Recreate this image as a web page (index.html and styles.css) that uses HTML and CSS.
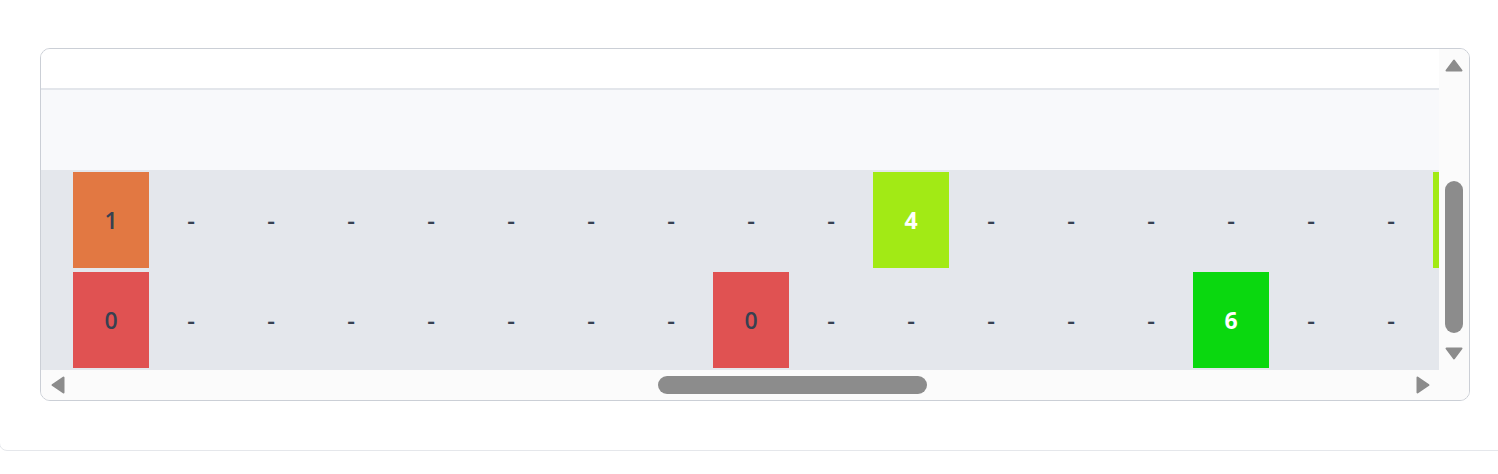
FILE: index.html
```html
<!DOCTYPE html>
<html lang="en">
<head>
<meta charset="utf-8">
<title>Grid</title>
<link rel="stylesheet" href="styles.css">
</head>
<body>
<div class="card">
  <div class="frame">
    <div class="viewport">
      <div class="head-top"></div>
      <div class="head-sub"></div>
      <div class="row">
        <div class="cell"><div class="box box-orange">1</div></div>
        <div class="cell"><span class="dash">-</span></div>
        <div class="cell"><span class="dash">-</span></div>
        <div class="cell"><span class="dash">-</span></div>
        <div class="cell"><span class="dash">-</span></div>
        <div class="cell"><span class="dash">-</span></div>
        <div class="cell"><span class="dash">-</span></div>
        <div class="cell"><span class="dash">-</span></div>
        <div class="cell"><span class="dash">-</span></div>
        <div class="cell"><span class="dash">-</span></div>
        <div class="cell"><div class="box box-lime">4</div></div>
        <div class="cell"><span class="dash">-</span></div>
        <div class="cell"><span class="dash">-</span></div>
        <div class="cell"><span class="dash">-</span></div>
        <div class="cell"><span class="dash">-</span></div>
        <div class="cell"><span class="dash">-</span></div>
        <div class="cell"><span class="dash">-</span></div>
        <div class="cell"><div class="box box-lime"></div></div>
      </div>
      <div class="row">
        <div class="cell"><div class="box box-red">0</div></div>
        <div class="cell"><span class="dash">-</span></div>
        <div class="cell"><span class="dash">-</span></div>
        <div class="cell"><span class="dash">-</span></div>
        <div class="cell"><span class="dash">-</span></div>
        <div class="cell"><span class="dash">-</span></div>
        <div class="cell"><span class="dash">-</span></div>
        <div class="cell"><span class="dash">-</span></div>
        <div class="cell"><div class="box box-red">0</div></div>
        <div class="cell"><span class="dash">-</span></div>
        <div class="cell"><span class="dash">-</span></div>
        <div class="cell"><span class="dash">-</span></div>
        <div class="cell"><span class="dash">-</span></div>
        <div class="cell"><span class="dash">-</span></div>
        <div class="cell"><div class="box box-green">6</div></div>
        <div class="cell"><span class="dash">-</span></div>
        <div class="cell"><span class="dash">-</span></div>
      </div>
    </div>
    <div class="vscroll">
      <svg class="arrow-v" width="18" height="13" viewBox="0 0 18 13"><polygon points="9,1.5 16.5,11.5 1.5,11.5" /></svg>
      <div class="vthumb"></div>
      <svg class="arrow-v" width="18" height="13" viewBox="0 0 18 13"><polygon points="1.5,1.5 16.5,1.5 9,11.5" /></svg>
    </div>
    <div class="hscroll">
      <svg class="arrow-h" width="14" height="18" viewBox="0 0 14 18"><polygon points="1.5,9 12.5,1.5 12.5,16.5" /></svg>
      <div class="hthumb"></div>
      <svg class="arrow-h" width="14" height="18" viewBox="0 0 14 18"><polygon points="1.5,1.5 12.5,9 1.5,16.5" /></svg>
    </div>
    <div class="corner"></div>
  </div>
</div>
</body>
</html>
```

FILE: styles.css
```css
html, body {
  margin: 0;
  padding: 0;
  background: #ffffff;
  overflow: hidden;
}

body {
  font-family: "Open Sans", "Liberation Sans", sans-serif;
}

.card {
  margin: -10px 0 0 -1px;
  width: 1530px;
  box-sizing: border-box;
  border: 1px solid #e5e7eb;
  border-radius: 8px;
  padding: 57px 0 49px 40px;
  background: #ffffff;
}

.frame {
  width: 1430px;
  box-sizing: border-box;
  border: 1px solid #cbcfd6;
  border-radius: 10px;
  overflow: hidden;
  display: grid;
  grid-template-columns: 1398px 30px;
  grid-template-rows: 321px 30px;
  background: #fbfbfb;
}

.viewport {
  grid-column: 1;
  grid-row: 1;
  overflow: hidden;
  display: flex;
  flex-direction: column;
  background: #e4e7ec;
}

.head-top {
  flex: 0 0 39px;
  background: #ffffff;
  border-bottom: 2px solid #e3e6eb;
}

.head-sub {
  flex: 0 0 80px;
  background: #f8f9fb;
}

.row {
  flex: 0 0 100px;
  display: flex;
  padding-left: 30px;
  background: #e4e7ec;
}

.cell {
  flex: 0 0 80px;
  box-sizing: border-box;
  height: 100px;
  padding: 2px;
  display: flex;
  align-items: center;
  justify-content: center;
}

.dash {
  font-size: 24px;
  font-weight: 600;
  color: #374151;
  line-height: 1;
}

.box {
  width: 76px;
  height: 96px;
  display: flex;
  align-items: center;
  justify-content: center;
  font-size: 23px;
  line-height: 1;
  color: #374151;
  font-weight: 600;
}

.box-orange { background: #e27842; }
.box-red { background: #e05252; }
.box-lime { background: #a2ea15; color: #ffffff; font-weight: 700; }
.box-green { background: #0ad80f; color: #ffffff; font-weight: 700; }

.vscroll {
  grid-column: 2;
  grid-row: 1;
  display: flex;
  flex-direction: column;
  align-items: center;
  padding: 10px 0;
  background: #fbfbfb;
}

.vthumb {
  width: 18px;
  height: 152px;
  border-radius: 9px;
  background: #8c8c8c;
  margin: 109px 0 14px;
}

.arrow-v polygon,
.arrow-h polygon {
  fill: #8c8c8c;
  stroke: #8c8c8c;
  stroke-width: 2;
  stroke-linejoin: round;
}

.hscroll {
  grid-column: 1;
  grid-row: 2;
  display: flex;
  align-items: center;
  padding: 0 9px 0 10px;
  background: #fbfbfb;
}

.hthumb {
  width: 269px;
  height: 18px;
  border-radius: 9px;
  background: #8c8c8c;
  margin-left: 593px;
  margin-right: auto;
}

.corner {
  grid-column: 2;
  grid-row: 2;
  background: #fbfbfb;
}
```
